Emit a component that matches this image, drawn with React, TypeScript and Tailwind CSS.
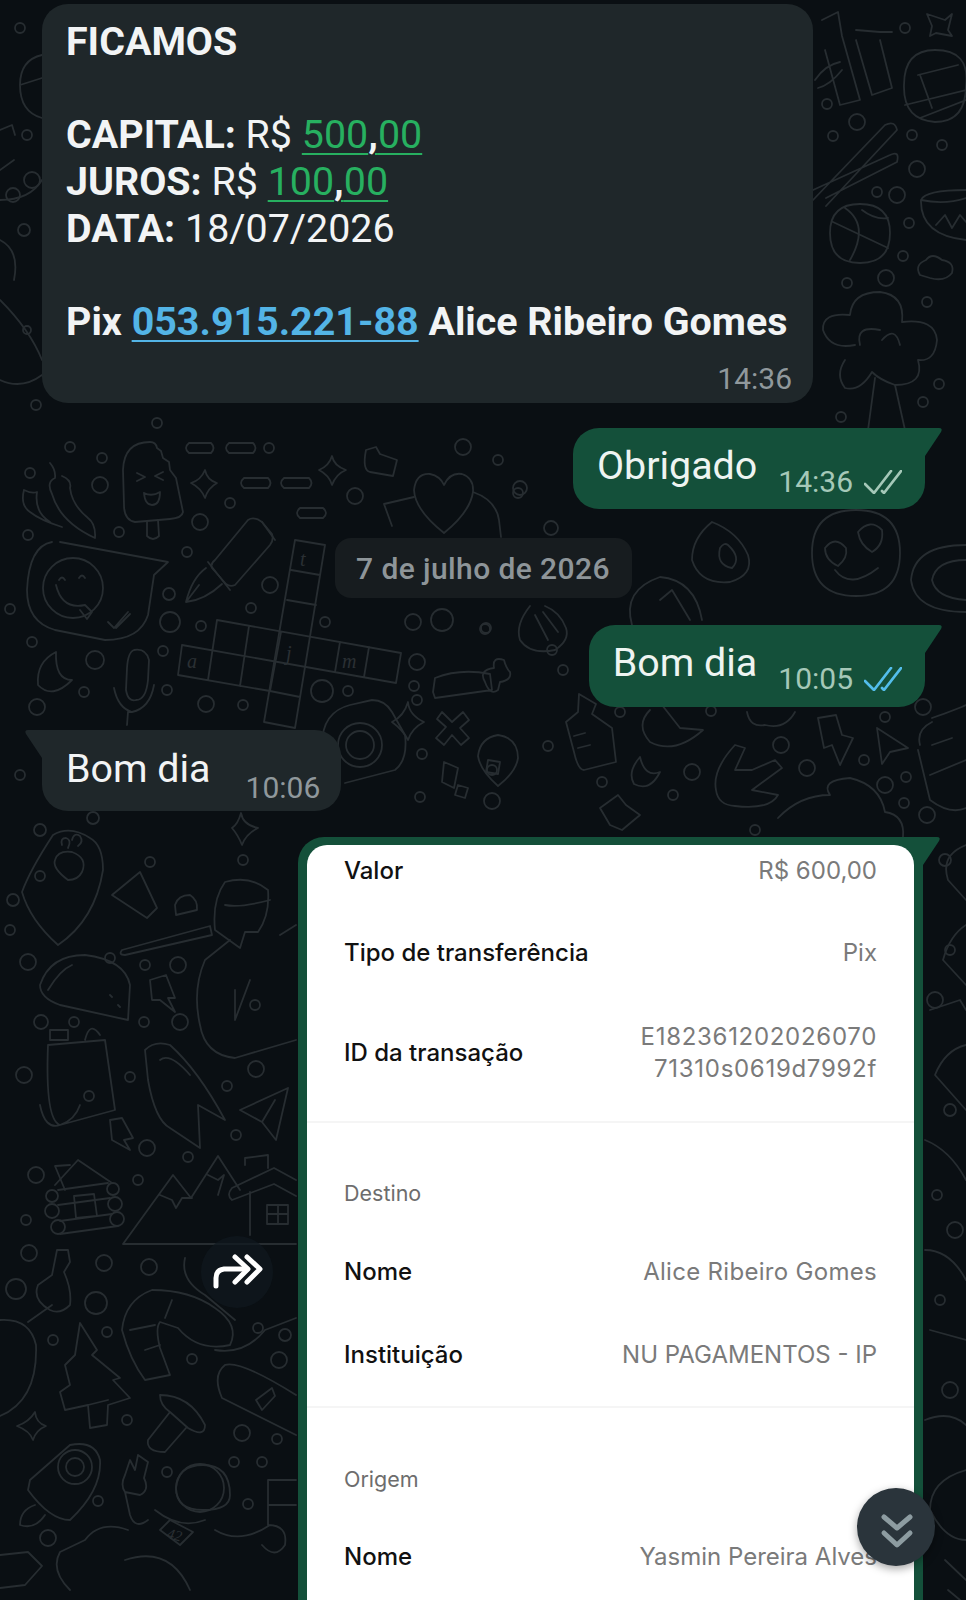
import React from "react";

// wallpaper doodles, page coordinates
const doodlePaths: string[] = [
  // popsicle
  "M124 505 L123 470 Q124 442 150 442 Q156 442 157 448 L161 451 L163 458 L169 462 L170 470 L176 478 L183 512 Q182 518 170 519 L135 522 Q124 520 124 505 Z",
  "M147 521 L147 536 Q153 542 159 536 L158 520 M137 473 L145 477 L137 481 M163 472 L155 476 L163 480 M144 493 Q152 497 160 492 Q160 505 152 505 Q145 505 144 493",
  // chili
  "M50 463 Q56 470 55 478 Q46 482 52 494 Q60 522 95 538 Q96 524 88 518 Q72 505 70 488 Q72 480 62 476",
  "M24 490 Q32 494 37 492 Q34 512 50 522 M24 490 Q20 505 30 512 Q40 520 62 527",
  // pills
  "M189 443 H211 Q216 448 211 453 H189 Q183 448 189 443 Z M229 443 H253 Q258 448 253 453 H229 Q223 448 229 443 Z",
  "M244 478 H268 Q273 483 268 488 H244 Q238 483 244 478 Z M284 478 H309 Q314 483 309 488 H284 Q278 483 284 478 Z",
  "M300 508 H323 Q329 513 323 518 H300 Q294 513 300 508 Z",
  // sparkles
  "M205 470 Q207 480 217 483 Q208 488 205 498 Q201 488 191 483 Q201 480 205 470 Z",
  "M332 456 Q334 466 346 470 Q336 474 332 485 Q329 475 319 470 Q329 466 332 456 Z",
  "M35 1412 Q36 1423 46 1426 Q36 1430 33 1440 Q30 1431 17 1426 Q29 1422 35 1412 Z",
  "M241 813 Q243 825 258 828 Q246 834 242 845 Q238 835 232 828 Q238 824 241 813 Z",
  "M927 14 L945 20 L952 14 L948 30 L952 36 L936 33 L930 36 L932 26 Z",
  // smiley blob
  "M52 542 Q29 546 27 590 Q27 622 55 630 L105 640 Q140 640 148 615 L154 575 L168 562 L60 542",
  "M56 585 Q62 610 85 605 M59 580 Q62 575 65 580 M79 578 Q82 573 85 578 M85 605 L92 612 L87 619 L80 610 M108 622 L114 628 L128 612 M116 628 L130 614",
  // mic and moon
  "M134 650 Q128 652 127 668 L126 690 Q128 702 136 700 Q146 700 148 680 L149 660 Q146 648 134 650 Z M114 688 Q118 708 132 712 L128 712 L127 725 M132 712 Q150 708 154 685",
  "M56 652 Q36 662 38 685 Q52 700 72 680 Q55 680 56 652 Z",
  // pen
  "M215 560 L248 520 Q254 516 262 522 L272 534 Q274 540 270 545 L235 585 Q230 587 226 584 L212 568 Q210 564 215 560 Z",
  "M208 562 L230 590 M206 568 Q192 578 186 602 Q205 600 222 584 M186 602 L199 585 M262 522 L275 540",
  // crossword
  "M295 540 L325 545 L295 728 L264 722 Z M291 570 L320 575 M287 600 L316 605 M270 691 L300 697",
  "M217 620 L401 653 L396 683 L182 645 L178 675 L270 691 M217 620 L208 680 M249 626 L240 686 M340 642 L335 672 M369 647 L364 677 M281 632 L270 691",
  // heart mug
  "M444 533 Q415 510 414 490 Q416 473 430 474 Q440 476 444 485 Q450 472 462 474 Q474 478 473 492 Q470 512 444 533 Z",
  "M414 497 L384 504 L392 526 M473 492 Q496 500 499 520 L501 537",
  "M366 450 L376 447 L380 454 L397 460 L393 476 L370 472 Q362 470 366 450 Z",
  // group figure
  "M433 692 L435 678 Q460 668 490 674 L492 690 L435 698 Z M485 682 Q478 670 494 668 Q492 656 504 660 Q506 668 510 672 Q512 680 500 682 L498 690 Q490 696 485 682",
  // x, map pin, camera
  "M442 712 L452 722 L463 712 L469 720 L460 728 L469 738 L461 745 L452 735 L444 745 L436 738 L446 727 L437 719 Z",
  "M498 735 Q518 738 518 758 Q516 772 498 786 Q480 770 478 756 Q480 738 498 735 Z",
  "M322 745 Q322 712 350 705 L372 700 Q385 700 392 712 L405 735 Q408 760 395 770 L345 783",
  "M408 702 Q409 715 424 722 Q412 728 408 740 Q403 730 392 722 Q404 716 408 702 Z",
  "M444 762 L458 768 L454 788 L442 782 Z M458 785 L468 788 L465 798 L455 795 Z M488 760 L500 762 L498 774 L486 772 Z",
  // bottle
  "M579 694 L596 704 L592 714 L612 728 L616 762 L584 770 Q578 770 574 752 L566 722 L578 712 Z M574 736 L585 733 M578 748 L590 745",
  // fist
  "M530 606 Q515 625 520 640 Q530 655 555 650 Q570 640 566 628 Q560 612 545 606 M535 615 L548 640 M543 612 L558 632",
  // fire and hearts
  "M712 522 Q738 532 748 555 Q754 575 730 582 Q700 585 692 560 Q692 538 712 522 M720 548 Q716 565 732 568 Q742 558 728 545 Q724 542 720 548",
  "M856 510 Q900 510 900 553 Q900 596 856 596 Q812 596 812 553 Q812 510 856 510 Z",
  "M825 548 Q835 535 846 548 Q848 558 838 566 Q825 560 825 548 Z M858 532 Q870 518 882 530 Q884 545 872 552 Q860 545 858 532 Z M835 570 Q850 590 878 568",
  "M966 545 Q914 545 911 580 Q915 612 966 612 M966 560 Q936 560 932 580 Q936 598 966 600",
  // clock/weight
  "M632 625 Q622 590 660 577 Q695 580 702 620 M660 600 L672 590 L690 620",
  // bamboo and chopsticks
  "M822 20 L838 12 L842 36 L860 100 L840 105 L825 50 M880 40 L892 88 L872 95 L856 40 M856 30 L880 32 L892 32 M815 80 Q825 65 840 62 M818 88 Q830 85 842 70",
  "M813 200 L885 125 Q895 120 897 130 L826 206 M813 190 L890 155 Q900 150 897 162 L826 198",
  // globe
  "M935 50 Q970 50 966 85 Q966 122 935 122 Q903 120 904 85 Q904 50 935 50 Z M918 75 L958 65 M920 75 L932 108 M905 105 L966 90 M920 118 L966 100",
  // basketball
  "M860 204 Q890 204 890 233 Q890 263 860 263 Q830 263 830 233 Q830 204 860 204 Z M833 222 L888 248 M845 208 Q870 225 850 260 M862 210 Q875 220 888 218",
  // bowl, cloud
  "M966 190 Q925 190 921 200 Q920 235 966 240 M921 200 Q945 205 966 198 M936 225 L945 215 L952 228 L960 215 L966 222",
  "M920 275 Q914 265 926 260 Q932 252 942 260 Q955 262 952 273 Q945 282 930 278 Z",
  // broccoli
  "M855 345 Q830 350 823 330 Q822 312 850 315 Q852 292 880 292 Q905 295 902 322 Q935 318 937 340 Q935 362 918 360 Q925 385 895 385 Q880 380 872 372 Q860 392 845 388 Q835 375 845 360",
  "M860 345 Q855 325 880 330 M900 345 Q895 325 882 340 M875 378 L868 430 M895 385 L905 430",
  // paw shield
  "M53 835 Q30 870 22 892 Q30 920 58 945 Q95 920 103 870 Q103 845 90 838 Q70 825 53 835 Z",
  "M68 880 Q52 868 55 860 Q58 850 72 852 Q88 858 82 872 Q78 880 68 880 Z M62 845 Q60 838 66 838 Q72 840 68 848 M72 840 Q74 832 80 836 Q84 842 78 846",
  // tube and brush
  "M112 895 L140 872 L157 908 L147 918 Z M175 905 Q178 895 190 895 Q198 900 197 910 L176 915 Z",
  "M122 950 L210 926 L212 935 L125 955 Q118 955 122 950 Z",
  // taco
  "M40 985 Q50 955 85 955 Q125 960 130 985 L128 1020 L60 1005 Q40 998 40 985 Z M48 990 Q60 970 72 965 M110 995 L112 997 M118 1005 L120 1007",
  // person
  "M225 882 Q250 875 268 890 Q270 915 258 932 L245 932 L240 948 L215 930 Q212 900 225 882 Z M225 905 Q240 908 270 900",
  "M230 940 L205 960 Q192 990 200 1025 Q205 1055 235 1058 L296 1040 M280 935 L296 925 M235 990 L235 1020 L250 980",
  // bag and banana
  "M48 1045 L105 1040 L115 1110 L60 1125 Q45 1120 48 1045 Z M50 1040 L68 1040 L68 1030 L50 1030 Z M40 1105 Q45 1130 60 1125 Q75 1120 80 1105 M85 1040 Q90 1020 100 1035",
  // rocket, plane
  "M145 1050 Q155 1040 170 1045 Q198 1070 225 1120 L198 1105 L200 1148 L170 1128 Q155 1120 148 1080 Z M160 1060 Q170 1052 190 1075",
  "M288 1088 L240 1110 L262 1122 L276 1140 Z M262 1122 L275 1100",
  // small lightning
  "M150 980 L166 975 L175 998 L168 998 L175 1012 L160 1000 L152 1000 Z M110 1120 L122 1118 L133 1138 L124 1140 L130 1150 L112 1140 Z",
  // log cabin
  "M55 1185 L78 1160 L112 1183 M58 1190 L108 1183 M58 1205 L110 1198 M60 1221 L112 1214 M60 1234 L118 1226 M74 1196 L94 1194 L97 1216 L76 1218 Z",
  "M65 1190 L55 1166 L70 1165",
  // mountain and house
  "M123 1244 L173 1175 L191 1198 L218 1156 L240 1190 M123 1244 L296 1244 M160 1195 L172 1200 L176 1208 L182 1198 L192 1198 M208 1175 L218 1180 L224 1175 L218 1195",
  "M232 1200 Q226 1195 232 1188 L274 1168 L296 1180 M232 1200 L274 1184 L296 1196 M250 1192 L250 1235 M245 1165 L245 1158 L268 1155 L268 1168 M267 1205 H288 V1224 H267 Z M278 1205 V1224 M267 1214 H288",
  // bottle key, blob
  "M57 1250 L68 1250 L70 1262 L64 1272 Q72 1290 70 1305 Q60 1315 50 1310 Q32 1300 38 1285 L52 1275 Z M28 1322 L52 1305",
  "M0 1320 Q30 1318 36 1345 Q38 1400 0 1416",
  // shrimp
  "M152 1290 Q125 1300 122 1330 Q130 1360 145 1380 L170 1375 L160 1348 Q155 1328 160 1322 L178 1328 Q198 1352 230 1345 Q240 1325 215 1308 Q190 1290 152 1290 Z M145 1350 L160 1345 M130 1330 L155 1325 M172 1300 L165 1318",
  "M185 1258 Q180 1280 205 1295 L235 1320 M215 1350 Q245 1355 265 1330 L296 1318",
  // tree
  "M80 1323 L97 1350 L92 1355 L120 1378 L113 1380 L130 1398 L108 1405 L107 1425 L90 1428 L88 1405 L65 1410 L60 1392 L70 1385 L65 1365 L75 1355 Z M88 1405 L108 1400",
  // mushroom
  "M160 1395 Q190 1395 205 1425 Q205 1438 188 1428 L170 1412 Q160 1405 160 1395 Z M170 1412 L148 1440 Q146 1452 165 1452 L186 1428",
  // snowboard
  "M225 1365 Q240 1360 296 1395 M225 1365 Q212 1375 222 1398 L296 1435 M256 1400 L272 1388 L275 1396 L262 1410 Z",
  // rocket lower
  "M30 1480 L70 1445 Q95 1440 100 1460 Q102 1490 70 1520 Q50 1520 28 1490 Z M35 1505 Q20 1510 20 1525 Q35 1530 45 1515",
  // peace hand and astronaut
  "M125 1475 L130 1460 L135 1470 L138 1455 L148 1462 L144 1478 Q150 1490 140 1495 L125 1492 Q120 1485 125 1475 Z M125 1492 L130 1515 Q135 1530 148 1520 M155 1510 Q180 1530 205 1520",
  "M203 1465 Q230 1465 230 1495 Q230 1510 203 1510 Q176 1510 176 1488 Q178 1465 203 1465 Z M160 1530 L170 1520 L193 1532 L180 1545 Z M128 1530 Q100 1520 85 1540 L60 1552 Q50 1570 70 1590",
  "M125 1560 Q170 1545 190 1590 M215 1530 Q240 1545 270 1525 M268 1525 Q288 1525 285 1545 Q275 1560 262 1545 M268 1480 H296 M268 1505 H296 M268 1480 V1525",
  "M0 1555 L28 1552 L42 1566 L25 1585 L0 1588",
  // strips at the right
  "M966 845 Q940 855 948 880 Q966 900 966 900 M966 925 Q950 935 943 960 L966 985",
  "M930 1010 L960 1000 L966 1010 M966 1045 Q945 1050 935 1075 L966 1110",
  "M966 1470 Q930 1480 930 1510 Q945 1540 966 1540 M945 1560 L966 1580 M948 1590 L960 1600",
  "M925 1140 Q950 1150 966 1180 M925 1250 Q950 1250 966 1280 M930 1330 L966 1340 M925 1420 Q950 1410 966 1425",
  // strip at the left
  "M42 55 Q20 60 20 85 Q20 112 42 118 M20 85 L42 78 M0 130 L12 125 L15 135 M0 170 L14 160 M0 200 Q30 200 42 180 M0 240 Q20 250 14 280 M0 300 Q30 330 42 360 M0 380 Q22 390 42 375",
  "M932 718 Q960 708 966 705 M920 745 Q916 730 932 722 M918 750 L930 800 Q950 815 966 808 M932 745 L952 738 M930 775 L966 760",
  "M640 757 Q627 772 634 784 Q650 792 660 772 Q645 778 640 757 Z",
  "M716 790 Q712 770 735 745 L745 748 L735 770 L752 770 L775 760 L782 768 L752 790 L778 795 Q770 810 735 806 Q718 805 716 790 Z",
  "M818 718 L836 715 L842 735 L853 738 L840 765 L832 745 L824 748 Z",
  "M877 728 L908 748 L890 752 L882 764 Z",
  "M600 808 L618 795 L626 805 L640 815 L622 830 L610 825 Z",
  "M650 710 Q635 725 650 742 Q675 755 703 730 L680 728 L662 705",
  "M747 712 Q750 728 765 725 Q785 730 795 712",
  "M778 818 Q800 795 830 795 Q820 780 850 778 Q880 785 885 812 Q905 815 903 837",
];

const doodleCircles: number[][] = [
  [20, 28, 5], [27, 135, 5], [32, 180, 8], [24, 230, 6], [13, 195, 7], [27, 330, 4], [36, 405, 5],
  [827, 104, 5], [857, 122, 8], [833, 136, 5], [912, 135, 5], [942, 145, 5], [917, 169, 8], [877, 192, 5], [897, 195, 8],
  [909, 223, 5], [903, 256, 5], [886, 278, 8], [847, 283, 5], [927, 302, 5], [939, 384, 5], [923, 402, 5], [841, 417, 5], [905, 28, 5],
  [157, 423, 5], [70, 447, 5], [102, 458, 5], [269, 448, 5], [100, 485, 8], [30, 473, 5], [230, 503, 5], [200, 522, 8],
  [28, 535, 5], [119, 532, 5], [187, 552, 5], [270, 585, 8], [169, 594, 6], [10, 609, 5], [251, 608, 5], [201, 626, 5],
  [170, 622, 10], [32, 642, 5], [95, 660, 9], [163, 651, 5], [84, 692, 5], [37, 707, 8], [167, 690, 5], [206, 704, 8], [243, 705, 5],
  [322, 691, 11], [348, 691, 5], [325, 622, 5], [413, 622, 8], [485, 629, 5], [417, 662, 8], [417, 700, 5], [414, 686, 5],
  [463, 447, 8], [498, 460, 5], [520, 488, 7], [355, 496, 8], [551, 528, 7], [518, 493, 5], [552, 650, 5], [563, 670, 5],
  [442, 620, 11], [486, 628, 5], [422, 754, 5], [492, 801, 8], [420, 797, 5], [548, 746, 5], [492, 770, 5],
  [20, 775, 5], [40, 830, 6], [93, 818, 6], [40, 876, 5], [13, 900, 6], [150, 862, 5], [243, 860, 5], [10, 930, 5],
  [28, 962, 8], [145, 965, 5], [178, 965, 8], [110, 958, 5], [255, 1005, 5], [74, 1022, 5], [41, 1022, 7], [180, 1022, 8], [144, 1022, 5],
  [24, 1075, 8], [130, 1077, 5], [227, 1086, 5], [256, 1069, 8], [89, 1096, 5], [236, 1135, 5],
  [36, 1175, 8], [138, 1180, 5], [26, 1220, 5], [188, 1157, 5], [147, 1148, 8], [29, 1253, 8], [104, 1263, 8], [149, 1267, 8],
  [16, 1289, 10], [96, 1303, 11], [107, 1332, 5], [53, 1340, 5], [192, 1359, 5], [258, 1328, 5], [285, 1335, 6], [279, 1360, 8],
  [242, 1433, 8], [277, 1439, 5], [127, 1420, 5], [234, 1462, 5], [262, 1462, 5], [167, 1472, 5], [98, 1501, 5], [248, 1504, 5], [48, 1538, 8],
  [620, 712, 5], [711, 711, 5], [692, 772, 8], [602, 782, 5], [673, 795, 5], [781, 745, 8], [807, 768, 8], [864, 760, 5], [885, 717, 5],
  [923, 707, 8], [885, 785, 8], [906, 777, 5], [904, 803, 5], [927, 815, 8], [755, 830, 5], [950, 950, 5], [945, 860, 6], [935, 1000, 8], [950, 1110, 6],
  [937, 1195, 5], [955, 1230, 8], [940, 1300, 5], [950, 1390, 8],
];

// concentric rings (camera, rocket window, smiley), cabin log ends
const doodleRings: number[][] = [
  [360, 745, 22], [360, 745, 14], [75, 1467, 17], [75, 1467, 9], [73, 588, 30], [200, 1488, 24],
  [52, 1196, 6], [52, 1211, 7], [58, 1227, 7], [113, 1189, 6], [115, 1204, 7], [117, 1219, 7],
];

const WallpaperDoodles = () => (
  <svg className="absolute inset-0" width="966" height="1600" viewBox="0 0 966 1600" fill="none" stroke="#272d31" strokeWidth="1.8" strokeLinecap="round" strokeLinejoin="round">
    {doodlePaths.map((d, i) => (
      <path key={i} d={d} />
    ))}
    {doodleCircles.map(([cx, cy, r], i) => (
      <circle key={i} cx={cx} cy={cy} r={r} />
    ))}
    {doodleRings.map(([cx, cy, r], i) => (
      <circle key={i} cx={cx} cy={cy} r={r} />
    ))}
    <g fill="#2a3034" stroke="none" fontFamily="Liberation Serif, serif" fontStyle="italic" fontSize="20">
      <text x="300" y="566">t</text>
      <text x="286" y="660">j</text>
      <text x="342" y="668">m</text>
      <text x="187" y="668">a</text>
      <text x="166" y="1538" fontSize="15" transform="rotate(14 166 1538)">42</text>
    </g>
  </svg>
);

const OutTail = () => (
  <svg className="absolute left-full top-0" width="18" height="30" viewBox="0 0 18 30">
    <path d="M0 0 H14 Q18 0 16 4 L0 28 Z" fill="#14503a" />
  </svg>
);

const InTail = () => (
  <svg className="absolute right-full top-0" width="18" height="30" viewBox="0 0 18 30">
    <path d="M18 0 H4 Q0 0 2 4 L18 28 Z" fill="#1f272a" />
  </svg>
);

const Ticks = ({ color }: { color: string }) => (
  <svg width="38" height="24" viewBox="0 0 38 24" fill="none" stroke={color} strokeWidth="2.7" strokeLinecap="round" strokeLinejoin="round">
    <path d="M1 14 L10 23 L27 1" />
    <path d="M18 21 L20 23 L37 1" />
  </svg>
);

const DetailRow = ({ label, value, className }: { label: string; value: React.ReactNode; className: string }) => (
  <div className={`flex items-center justify-between ${className}`}>
    <span className="font-medium text-[#111111]">{label}</span>
    <span className="text-right text-[#7a7a7a]">{value}</span>
  </div>
);

export default function App() {
  return (
    <div className="relative h-[1600px] w-[966px] overflow-hidden bg-[#0a0f13] font-[Roboto,sans-serif]">
      <WallpaperDoodles />

      <div className="relative flex flex-col pt-[4px]">
        <div className="ml-[42px] h-[399px] w-[771px] rounded-[26px] bg-[#1f272a] pl-[24px] pr-[21px] pt-[15px]">
          <div className="text-[39.4px] leading-[46.67px] text-[#f2f4f5]">
            <p className="font-bold">FICAMOS</p>
            <p className="h-[46.67px]" />
            <p>
              <b>CAPITAL:</b> R${" "}
              <span className="text-[#27b060] underline decoration-[1.5px] underline-offset-[5px]">
                500<b className="text-[#f2f4f5]">,</b>00
              </span>
            </p>
            <p>
              <b>JUROS:</b> R${" "}
              <span className="text-[#27b060] underline decoration-[1.5px] underline-offset-[5px]">
                100<b className="text-[#f2f4f5]">,</b>00
              </span>
            </p>
            <p>
              <b>DATA:</b> 18/07/2026
            </p>
            <p className="h-[46.67px]" />
            <p className="font-bold">
              Pix <span className="text-[#53b4e6] underline decoration-2 underline-offset-[5px]">053.915.221-88</span> Alice Ribeiro Gomes
            </p>
          </div>
          <p className="mt-[15px] text-right text-[30px] leading-[36px] text-[#90989c]">14:36</p>
        </div>

        <div className="relative mr-[41px] mt-[25px] flex h-[81px] items-start gap-[21px] self-end rounded-[26px] rounded-tr-none bg-[#14503a] pl-[24px] pr-[23px] pt-[15px]">
          <OutTail />
          <span className="text-[39.4px] leading-[46.67px] text-[#eef4f1]">Obrigado</span>
          <span className="mt-[21px] flex items-center gap-[11px] text-[30px] leading-[36px] text-[#a5c8b8]">
            14:36
            <Ticks color="#a5c8b8" />
          </span>
        </div>

        <div className="mt-[29px] flex h-[60px] w-[297px] items-center justify-center self-center rounded-[16px] bg-[#171c1f] text-[30px] font-medium tracking-[0.4px] text-[#8e9599]">
          7 de julho de 2026
        </div>

        <div className="relative mr-[41px] mt-[27px] flex h-[82px] items-start gap-[21px] self-end rounded-[26px] rounded-tr-none bg-[#14503a] pl-[24px] pr-[23px] pt-[15px]">
          <OutTail />
          <span className="text-[39.4px] leading-[46.67px] text-[#eef4f1]">Bom dia</span>
          <span className="mt-[21px] flex items-center gap-[11px] text-[30px] leading-[36px] text-[#a5c8b8]">
            10:05
            <Ticks color="#53bdeb" />
          </span>
        </div>

        <div className="relative ml-[42px] mt-[23px] flex h-[81px] items-start gap-[35px] self-start rounded-[26px] rounded-tl-none bg-[#1f272a] pl-[24px] pr-[21px] pt-[16px]">
          <InTail />
          <span className="text-[39.4px] leading-[46.67px] text-[#f2f4f5]">Bom dia</span>
          <span className="mt-[24px] text-[30px] leading-[36px] text-[#90989c]">10:06</span>
        </div>

        <div className="relative ml-[298px] mt-[26px] w-[625px] rounded-[26px] rounded-tr-none bg-[#14503a] px-[9px] pt-[8px]">
          <OutTail />
          <div className="rounded-t-[20px] bg-white pb-[60px] font-[Inter,sans-serif] text-[24px] leading-[32px]">
            <div className="px-[37px] pt-[10px]">
              <DetailRow label="Valor" value="R$ 600,00" className="h-[32px]" />
              <DetailRow label="Tipo de transferência" value="Pix" className="mt-[50px] h-[32px]" />
              <DetailRow
                label="ID da transação"
                value={
                  <span className="tracking-[0.7px]">
                    E182361202026070
                    <br />
                    71310s0619d7992f
                  </span>
                }
                className="mt-[50px] h-[68px]"
              />
            </div>
            <div className="mt-[34px] h-[2px] bg-[#f5f5f5]" />
            <div className="px-[37px]">
              <p className="mt-[54px] text-[21.5px] leading-[32px] text-[#6d6d6d]">Destino</p>
              <DetailRow label="Nome" value={<span className="tracking-[0.3px]">Alice Ribeiro Gomes</span>} className="mt-[47px] h-[32px]" />
              <DetailRow label="Instituição" value="NU PAGAMENTOS  -  IP" className="mt-[51px] h-[32px]" />
            </div>
            <div className="mt-[35px] h-[2px] bg-[#f5f5f5]" />
            <div className="px-[37px]">
              <p className="mt-[55px] text-[21.5px] leading-[32px] text-[#6d6d6d]">Origem</p>
              <DetailRow label="Nome" value="Yasmin Pereira Alves" className="mt-[46px] h-[32px]" />
            </div>
          </div>
        </div>
      </div>

      <button className="absolute left-[201px] top-[1236px] flex h-[72px] w-[72px] items-center justify-center rounded-full bg-[#101820]/70">
        <svg width="72" height="72" viewBox="0 0 72 72" fill="none" stroke="#ffffff" strokeWidth="5" strokeLinecap="round" strokeLinejoin="round">
          <path d="M15 50 V42 Q15 34 23 33 H46" />
          <path d="M34 21 L47 33 L34 46" />
          <path d="M46 21 L59 33 L46 46" />
        </svg>
      </button>

      <button className="absolute left-[857px] top-[1488px] flex h-[78px] w-[78px] items-center justify-center rounded-full bg-[#2a343b] shadow-[0_3px_8px_rgba(0,0,0,0.35)]">
        <svg width="78" height="78" viewBox="0 0 78 78" fill="none" stroke="#8d9ca1" strokeWidth="5" strokeLinecap="round" strokeLinejoin="round">
          <path d="M27 29 L40 40 L53 29" />
          <path d="M27 45 L40 57 L53 45" />
        </svg>
      </button>
    </div>
  );
}
